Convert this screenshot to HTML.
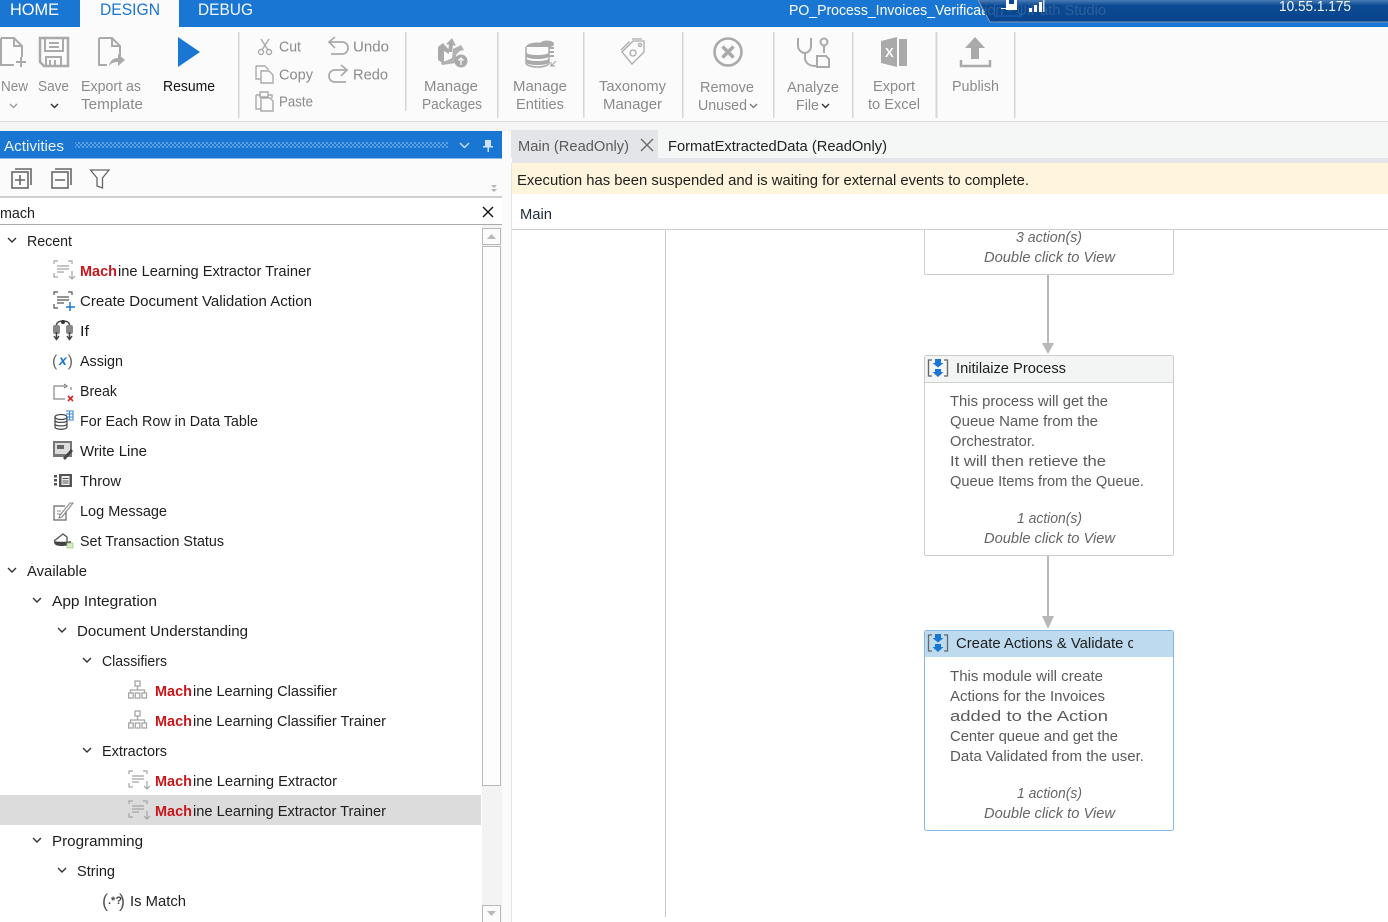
<!DOCTYPE html>
<html><head><meta charset="utf-8"><title>Studio</title>
<style>
html,body{margin:0;padding:0;background:#fff;width:1388px;height:922px;overflow:hidden}
svg{display:block}
text{font-family:"Liberation Sans",sans-serif;font-size:14.5px;fill:#1e1e1e}
.r text,.r{fill:#8b8b8b}
.b{font-weight:bold;fill:#c8171a}
.c{fill:#5a5a5a}
.i{font-style:italic;fill:#666}
.ic{fill:none;stroke:#aaa;stroke-width:2}
.sm{fill:none;stroke:#999;stroke-width:1.2}
.ch{fill:none;stroke:#333;stroke-width:1.4}
</style></head><body>
<svg xmlns="http://www.w3.org/2000/svg" width="1388" height="922" viewBox="0 0 1388 922">
<defs>
<pattern id="dots" width="4" height="4" patternUnits="userSpaceOnUse"><rect width="4" height="4" fill="#1976d2"/><rect width="2" height="2" fill="#5c9fe0"/><rect x="2" y="2" width="2" height="2" fill="#5c9fe0"/></pattern>
<linearGradient id="band" x1="0" y1="0" x2="0" y2="1"><stop offset="0" stop-color="#4a7cb5"/><stop offset=".25" stop-color="#0b4a92"/><stop offset="1" stop-color="#09448d"/></linearGradient>
<g id="ext" class="sm" fill="none"><path d="M1 5V2H5M15 2H19V5M1 14V18H5M4 7H16M4 10H16M4 13H11M19 12V20M16 17L19 20L22 17" stroke="#a5a5a5"/></g>
<g id="cls" fill="none" stroke="#a5a5a5" stroke-width="1.300"><rect x="7" y="1" width="5" height="5"/><path d="M9.500 6V10M2.500 13V10H16.500V13"/><rect x="0.700" y="13" width="4.500" height="5"/><rect x="7.300" y="13" width="4.500" height="5"/><rect x="14" y="13" width="4.500" height="5"/></g>
<g id="seq"><path d="M4 1H0.500V17H4M16 1H19.500V17H16" fill="none" stroke="#666" stroke-width="1.300"/><path d="M7 0H13V4H15.500L10 8.500L4.500 4H7Z" fill="#1976d2"/><path d="M7 10H13V13H15.500L10 18L4.500 13H7Z" fill="#1976d2"/></g>
</defs>

<!-- base -->
<rect width="1388" height="922" fill="#fff"/>
<!-- title bar -->
<rect width="1388" height="27" fill="#1976d2"/>
<rect x="80" width="99" height="27" fill="#fbfbfb"/>
<text x="10" y="15" style="font-size:16.500px;fill:#fff" textLength="49" lengthAdjust="spacingAndGlyphs">HOME</text>
<text x="100" y="15" style="font-size:16.500px;fill:#1976d2" textLength="60" lengthAdjust="spacingAndGlyphs">DESIGN</text>
<text x="198" y="15" style="font-size:16.500px;fill:#f2f7fd" textLength="55" lengthAdjust="spacingAndGlyphs">DEBUG</text>
<text x="789" y="15" style="font-size:14.500px;fill:#fff" textLength="196" lengthAdjust="spacingAndGlyphs">PO_Process_Invoices_Verificat</text>
<path d="M978 0H1388V22H990Z" fill="url(#band)"/>
<path d="M978 0L990 22H1388" fill="none" stroke="#7d97b8" stroke-width="1"/>
<text x="984" y="15" style="font-size:14.500px;fill:#2e5f9c" textLength="122" lengthAdjust="spacingAndGlyphs">ion - UiPath Studio</text>
<rect x="994.500" y="4" width="27" height="12" fill="none" stroke="#1c64b4"/>
<path d="M1006 0H1017V10H1006Z" fill="#fff"/><rect x="1009" y="0" width="5" height="4" fill="#0b4a92"/><rect x="1001" y="8" width="6" height="1" fill="#fff"/>
<path d="M1029 8h3v4h-3zM1034 5h3v7h-3zM1039 2h3v10h-3z" fill="#fff"/>
<rect x="1043" y="0" width="1.500" height="12" fill="#cfd8e6"/>
<text x="1279" y="11" style="font-size:14.500px;fill:#f2f5fa" textLength="72" lengthAdjust="spacingAndGlyphs">10.55.1.175</text>

<!-- ribbon -->
<rect y="27" width="1388" height="94" fill="#fbfbfb"/>
<rect y="121" width="1388" height="1" fill="#dcdcdc"/>
<rect y="122" width="1388" height="9" fill="#f5f5f5"/>
<g fill="#d6d6d6">
<rect x="238" y="32" width="1.500" height="86"/><rect x="405" y="32" width="1.500" height="79"/><rect x="497" y="32" width="1.500" height="86"/><rect x="583" y="32" width="1.500" height="86"/><rect x="682" y="32" width="1.500" height="86"/><rect x="773" y="32" width="1.500" height="86"/><rect x="852" y="32" width="1.500" height="86"/><rect x="935.500" y="32" width="2" height="86"/><rect x="1014" y="32" width="1.500" height="86"/>
</g>

<!-- ribbon icons -->
<path class="ic" d="M1 38H14L22 46V57M14 38V46H22M1 38V65H14"/>
<path d="M20 58h2v4h4v2h-4v4h-2v-4h-4v-2h4z" fill="#aaa" transform="translate(0,-1)"/>
<path class="ic" d="M40 38H68V66H44L40 62Z" style="stroke-width:2.500"/>
<path class="ic" d="M45 38V51H63V38M49 43H59M49 47H59M46 66V57H61V66M50 60V66H55V60"/>
<path class="ic" d="M99 38H112L120 46V56M112 38V46H120M99 38V65H107"/>
<path d="M109 66C110 60 114 58 118 58V54L125 60L118 66V62C114 62 111 63 109 66Z" fill="#aaa"/>
<path d="M178 37L200 52L178 67Z" fill="#1976d2"/>

<g fill="none" stroke="#aaa" stroke-width="1.400">
<path d="M261 39L268 50M269 39L262 50"/><circle cx="261" cy="52" r="2.500"/><circle cx="269" cy="52" r="2.500"/>
<path d="M256 66H265L268 69V70M256 66V79H261M261 71H269L273 75V83H261Z"/>
<path d="M256 95H261M268 95H272V98M256 95V109H261M260 92H268V97H260ZM261 98H270L273 101V111H261Z"/>
<path d="M329 42H342C350 42 350 54 342 54H331" stroke-width="1.700"/><path d="M335 37L329 42L335 48" stroke-width="1.700"/>
<path d="M347 70H335C327 70 327 82 335 82H346" stroke-width="1.700"/><path d="M341 65L347 70L341 76" stroke-width="1.700"/>
</g>

<!-- packages -->
<g fill="#aaa">
<path d="M451 38L456 45H453V52H449V45H446Z" transform="rotate(8 451 45)"/>
<path d="M438 47L443 43L449 50V54L444 51V64L438 60Z"/>
<path d="M453 49L461 45L464 50L460 51L456 55V63L442 65L441 63L452 58Z" opacity=".9"/>
<circle cx="461" cy="61" r="6.500"/>
</g>
<path d="M461 65V58M458.500 60.500L461 58L463.500 60.500" stroke="#fbfbfb" stroke-width="1.300" fill="none"/>

<!-- entities -->
<g>
<ellipse cx="547" cy="44" rx="7" ry="3.500" fill="#aaa"/>
<path d="M545 48H554M548 52H554M548 56H554" stroke="#aaa" stroke-width="2"/>
<ellipse cx="537.500" cy="47" rx="11.500" ry="4.500" fill="#aaa"/>
<path d="M526 47V63C526 65 531 67 537.500 67S549 65 549 63V47" fill="#fbfbfb" stroke="#aaa" stroke-width="1.500"/>
<path d="M526 52C526 56 549 56 549 52V56C549 60 526 60 526 56ZM526 58C526 62 549 62 549 58V62C549 66 526 66 526 62Z" fill="#aaa"/>
<path d="M556 61L551 66M551 62V66H555" stroke="#aaa" fill="none" stroke-width="1.200"/>
</g>
<!-- taxonomy -->
<g fill="none" stroke="#aaa" stroke-width="1.300">
<path d="M622 52L633 41H644V52L632 64Z"/>
<path d="M632 39H642M629.500 41.500L621 50"/>
<circle cx="640" cy="45" r="1.500"/>
<circle cx="633" cy="53" r="3"/>
</g>
<!-- remove -->
<circle cx="728" cy="52" r="13.500" fill="none" stroke="#aaa" stroke-width="2.600"/>
<path d="M722.500 46.500L733.500 57.500M733.500 46.500L722.500 57.500" stroke="#aaa" stroke-width="3.600"/>
<!-- analyze -->
<g fill="none" stroke="#aaa" stroke-width="2">
<path d="M798 38V46C798 50 802 53 805 53C808 53 811 50 811 46V38"/>
<path d="M805 53V58C805 63 810 66 815 66H817"/>
<circle cx="824" cy="42" r="3.500"/><path d="M824 46V53"/>
<path d="M817 56H826L829 59V67H817Z"/>
</g>
<!-- excel -->
<path d="M881 41L897 37V67L881 63Z" fill="#aaa"/>
<rect x="899" y="39" width="8" height="27" fill="#aaa"/>
<text x="885" y="57" style="font-size:13px;font-weight:bold;fill:#fbfbfb">X</text>
<!-- publish -->
<path d="M975 37L985 48H979V59H971V48H965Z" fill="#aaa"/>
<path d="M961 60V66H990V60" fill="none" stroke="#aaa" stroke-width="2.500"/>

<!-- ribbon text -->
<g class="r">
<text class="r" x="1" y="91" textLength="27" lengthAdjust="spacingAndGlyphs">New</text>
<text class="r" x="38" y="91" textLength="31" lengthAdjust="spacingAndGlyphs">Save</text>
<text class="r" x="81" y="91" textLength="60" lengthAdjust="spacingAndGlyphs">Export as</text>
<text class="r" x="81" y="109" textLength="62" lengthAdjust="spacingAndGlyphs">Template</text>
<text class="r" x="279" y="51.500" textLength="22" lengthAdjust="spacingAndGlyphs">Cut</text>
<text class="r" x="353" y="51.500" textLength="36" lengthAdjust="spacingAndGlyphs">Undo</text>
<text class="r" x="279" y="79.500" textLength="34" lengthAdjust="spacingAndGlyphs">Copy</text>
<text class="r" x="353" y="79.500" textLength="35" lengthAdjust="spacingAndGlyphs">Redo</text>
<text class="r" x="279" y="106.500" textLength="34" lengthAdjust="spacingAndGlyphs">Paste</text>
<text class="r" x="424" y="91" textLength="54" lengthAdjust="spacingAndGlyphs">Manage</text>
<text class="r" x="422" y="109" textLength="60" lengthAdjust="spacingAndGlyphs">Packages</text>
<text class="r" x="513" y="91" textLength="54" lengthAdjust="spacingAndGlyphs">Manage</text>
<text class="r" x="516" y="109" textLength="48" lengthAdjust="spacingAndGlyphs">Entities</text>
<text class="r" x="599" y="91" textLength="67" lengthAdjust="spacingAndGlyphs">Taxonomy</text>
<text class="r" x="603" y="109" textLength="59" lengthAdjust="spacingAndGlyphs">Manager</text>
<text class="r" x="700" y="92" textLength="54" lengthAdjust="spacingAndGlyphs">Remove</text>
<text class="r" x="698" y="110" textLength="49" lengthAdjust="spacingAndGlyphs">Unused</text>
<text class="r" x="787" y="92" textLength="52" lengthAdjust="spacingAndGlyphs">Analyze</text>
<text class="r" x="796" y="110" textLength="23" lengthAdjust="spacingAndGlyphs">File</text>
<text class="r" x="873" y="91" textLength="42" lengthAdjust="spacingAndGlyphs">Export</text>
<text class="r" x="868" y="109" textLength="52" lengthAdjust="spacingAndGlyphs">to Excel</text>
<text class="r" x="952" y="91" textLength="47" lengthAdjust="spacingAndGlyphs">Publish</text>
</g>
<text x="163" y="91" style="fill:#111" textLength="52" lengthAdjust="spacingAndGlyphs">Resume</text>
<path d="M10 104L13.500 107.500L17 104" fill="none" stroke="#999" stroke-width="1.300"/>
<path d="M51 104L54.500 107.500L58 104" class="ch"/>
<path d="M750 104L753.500 107.500L757 104" fill="none" stroke="#777" stroke-width="1.300"/>
<path d="M822 104L825.500 107.500L829 104" class="ch"/>

<!-- left panel -->
<rect x="502" y="131" width="10" height="791" fill="#fbfbfb"/>
<rect x="0" y="131" width="502" height="28" fill="#1976d2"/>
<rect x="0" y="158" width="502" height="1" fill="#8fbbe6"/>
<text x="4" y="151" style="fill:#eaf3fc" textLength="60" lengthAdjust="spacingAndGlyphs">Activities</text>
<rect x="75" y="142" width="373" height="6" fill="url(#dots)"/>
<path d="M460 143L464.500 147.500L469 143" fill="none" stroke="#cfe2f6" stroke-width="1.400"/>
<path d="M485 140H491V146H493V147.500H489V152H487.500V147.500H483V146H485Z" fill="#cfe2f6"/>
<rect x="0" y="159" width="502" height="38" fill="#fbfbfb"/>
<rect x="0" y="196" width="502" height="2" fill="#cfcfcf"/>
<g fill="none" stroke="#666" stroke-width="1.600">
<rect x="12" y="172" width="16" height="16"/><path d="M15 169H31V185M20 175V185M15 180H25"/>
<rect x="52" y="172" width="16" height="16"/><path d="M55 169H71V185M55 180H65"/>
<path d="M90.500 170H109L102.500 178V188L97 186V178Z" stroke-width="1.300"/>
</g>
<path d="M491 185H497L494 188ZM491 189H497L494 192Z" fill="#b5b5b5"/>
<rect x="0" y="198" width="502" height="26" fill="#fff"/>
<rect x="0" y="224" width="502" height="1" fill="#aaa"/>
<text x="0" y="218" textLength="35" lengthAdjust="spacingAndGlyphs">mach</text>
<path d="M483 207L493 217M493 207L483 217" stroke="#111" stroke-width="1.400"/>

<!-- scrollbar -->
<rect x="482" y="225" width="20" height="697" fill="#f3f3f3"/>
<rect x="482.500" y="228.500" width="18" height="16" fill="#fbfbfb" stroke="#b9b9b9"/>
<path d="M487 239L491.500 234L496 239Z" fill="#b9b9b9"/>
<rect x="482.500" y="246.500" width="18" height="539" fill="#fdfdfd" stroke="#b9b9b9"/>
<rect x="482.500" y="905.500" width="18" height="17" fill="#fbfbfb" stroke="#b9b9b9"/>
<path d="M487 911L491.500 916L496 911Z" fill="#b9b9b9"/>

<!-- tree selected -->
<rect x="0" y="795" width="481" height="30" fill="#dcdcdc"/>

<!-- tree chevrons -->
<g class="ch">
<path d="M8 238L12 242L16 238"/>
<path d="M8 568L12 572L16 568"/>
<path d="M33 598L37 602L41 598"/>
<path d="M58 628L62 632L66 628"/>
<path d="M83 658L87 662L91 658"/>
<path d="M83 748L87 752L91 748"/>
<path d="M33 838L37 842L41 838"/>
<path d="M58 868L62 872L66 868"/>
</g>

<!-- tree text -->
<text x="27" y="246" textLength="45" lengthAdjust="spacingAndGlyphs">Recent</text>
<text class="b" x="80" y="276" textLength="37" lengthAdjust="spacingAndGlyphs">Mach</text>
<text x="118" y="276" textLength="193" lengthAdjust="spacingAndGlyphs">ine Learning Extractor Trainer</text>
<text x="80" y="306" textLength="232" lengthAdjust="spacingAndGlyphs">Create Document Validation Action</text>
<text x="80" y="336" textLength="9" lengthAdjust="spacingAndGlyphs">If</text>
<text x="80" y="366" textLength="43" lengthAdjust="spacingAndGlyphs">Assign</text>
<text x="80" y="396" textLength="37" lengthAdjust="spacingAndGlyphs">Break</text>
<text x="80" y="426" textLength="178" lengthAdjust="spacingAndGlyphs">For Each Row in Data Table</text>
<text x="80" y="456" textLength="67" lengthAdjust="spacingAndGlyphs">Write Line</text>
<text x="80" y="486" textLength="41" lengthAdjust="spacingAndGlyphs">Throw</text>
<text x="80" y="516" textLength="87" lengthAdjust="spacingAndGlyphs">Log Message</text>
<text x="80" y="546" textLength="144" lengthAdjust="spacingAndGlyphs">Set Transaction Status</text>
<text x="27" y="576" textLength="60" lengthAdjust="spacingAndGlyphs">Available</text>
<text x="52" y="606" textLength="105" lengthAdjust="spacingAndGlyphs">App Integration</text>
<text x="77" y="636" textLength="171" lengthAdjust="spacingAndGlyphs">Document Understanding</text>
<text x="102" y="666" textLength="65" lengthAdjust="spacingAndGlyphs">Classifiers</text>
<text class="b" x="155" y="696" textLength="37" lengthAdjust="spacingAndGlyphs">Mach</text>
<text x="193" y="696" textLength="144" lengthAdjust="spacingAndGlyphs">ine Learning Classifier</text>
<text class="b" x="155" y="726" textLength="37" lengthAdjust="spacingAndGlyphs">Mach</text>
<text x="193" y="726" textLength="193" lengthAdjust="spacingAndGlyphs">ine Learning Classifier Trainer</text>
<text x="102" y="756" textLength="65" lengthAdjust="spacingAndGlyphs">Extractors</text>
<text class="b" x="155" y="786" textLength="37" lengthAdjust="spacingAndGlyphs">Mach</text>
<text x="193" y="786" textLength="144" lengthAdjust="spacingAndGlyphs">ine Learning Extractor</text>
<text class="b" x="155" y="816" textLength="37" lengthAdjust="spacingAndGlyphs">Mach</text>
<text x="193" y="816" textLength="193" lengthAdjust="spacingAndGlyphs">ine Learning Extractor Trainer</text>
<text x="52" y="846" textLength="91" lengthAdjust="spacingAndGlyphs">Programming</text>
<text x="77" y="876" textLength="38" lengthAdjust="spacingAndGlyphs">String</text>
<text x="130" y="906" textLength="56" lengthAdjust="spacingAndGlyphs">Is Match</text>

<!-- tree icons -->
<use href="#ext" x="53" y="259"/>
<g transform="translate(53,290)"><path d="M1 5V2H5M15 2H19V5M1 14V18H5M4 7H16M4 10H16M4 13H11" fill="none" stroke="#555" stroke-width="1.200"/><path d="M17 12V21M13 17H22" stroke="#1976d2" stroke-width="1.500"/></g>
<g transform="translate(53,320)">
<rect x="0" y="5" width="7" height="9" rx="2" fill="#888"/><rect x="13" y="5" width="7" height="9" rx="2" fill="#888"/>
<path d="M3.500 5C3.500 2 7 1 10 1S16.500 2 16.500 5M3.500 12V19M16.500 12V19M1 16L3.500 19.500L6 16M14 16L16.500 19.500L19 16" fill="none" stroke="#444" stroke-width="1.500"/><circle cx="10" cy="2" r="2" fill="#333"/></g>
<text x="52" y="366" style="font-size:16px;fill:#666">(</text>
<text x="73" y="366" style="font-size:16px;fill:#666" text-anchor="end">)</text>
<text x="59" y="365" style="font-size:14px;font-weight:bold;font-style:italic;fill:#1976d2">x</text>
<g transform="translate(53,383)"><path d="M12 3H1V16H12M18 7V4M18 14V16H16" fill="none" stroke="#888" stroke-width="1.200"/><path d="M11 1L14 3L11 5" fill="none" stroke="#666"/><path d="M15 13L20 18M20 13L15 18" stroke="#d9262c" stroke-width="1.600"/></g>
<g transform="translate(54,411)"><g fill="none" stroke="#444" stroke-width="1.200"><ellipse cx="7" cy="6" rx="6" ry="2.500"/><path d="M1 6V16C1 19 13 19 13 16V6M1 9.500C1 12 13 12 13 9.500M1 13C1 15.500 13 15.500 13 13"/></g><path d="M12 0H19V9H13M12 3H19M12 6H19M15.500 0V9" fill="none" stroke="#3d86d3" stroke-width="1.100"/></g>
<g transform="translate(53,441)"><rect x="0" y="0" width="19" height="16" fill="#777"/><rect x="2" y="2" width="15" height="11" fill="#ddd"/><rect x="4" y="4" width="7" height="4" fill="#666"/><path d="M10 17L18 8L20 10L12 19Z" fill="#444"/></g>
<g transform="translate(53,472)"><rect x="1" y="3" width="3" height="2.500" fill="#555"/><rect x="1" y="7" width="3" height="2.500" fill="#555"/><rect x="1" y="11" width="3" height="2.500" fill="#555"/><rect x="6" y="2" width="13" height="13" fill="#555"/><rect x="8.500" y="4" width="8" height="9" fill="#eee"/><path d="M9.500 6.500H15.500M9.500 9H15.500M9.500 11H15.500" stroke="#555"/></g>
<g transform="translate(53,501)"><path d="M12 5H1V19H13V10" fill="none" stroke="#666" stroke-width="1.200"/><path d="M4 10H8M4 13H8" stroke="#888"/><path d="M7 14L17 2L20 2L9 16L6 17Z" fill="none" stroke="#888" stroke-width="1.100"/></g>
<g transform="translate(53,531)"><path d="M1 10L10 3L14 6V12" fill="#fff" stroke="#555" stroke-width="1.300"/><path d="M1 10C4 11 16 11 18 10C18 13 16 15 9 15S1 13 1 10Z" fill="#444"/><rect x="14" y="12" width="6" height="5" fill="#d7ecc6" stroke="#9ac27a" stroke-width=".7"/></g>

<use href="#cls" x="128" y="680"/>
<use href="#cls" x="128" y="710"/>
<use href="#ext" x="128" y="769"/>
<use href="#ext" x="128" y="799"/>
<text x="102" y="907" style="font-size:18px;fill:#555">(</text>
<text x="108" y="904" style="font-size:11px;font-weight:bold;fill:#444">.*?</text>
<text x="125" y="907" style="font-size:18px;fill:#555" text-anchor="end">)</text>

<!-- main tabs -->
<rect x="512" y="130" width="876" height="28" fill="#f5f6f6"/>
<rect x="511" y="130" width="147" height="28" fill="#e4e5e8"/>
<rect x="512" y="158" width="876" height="5" fill="#e4e5e8"/>
<text x="518" y="151" style="fill:#5a5a5a" textLength="111" lengthAdjust="spacingAndGlyphs">Main (ReadOnly)</text>
<path d="M641 139L653 151M653 139L641 151" stroke="#6b6b6b" stroke-width="1.400"/>
<text x="668" y="151" style="fill:#222" textLength="219" lengthAdjust="spacingAndGlyphs">FormatExtractedData (ReadOnly)</text>
<rect x="512" y="163" width="876" height="31" fill="#fff5dd"/>
<text x="517" y="185" style="fill:#1e1e1e" textLength="512" lengthAdjust="spacingAndGlyphs">Execution has been suspended and is waiting for external events to complete.</text>
<rect x="512" y="194" width="876" height="35" fill="#fff"/>
<text x="520" y="219" style="fill:#1e2a3a" textLength="32" lengthAdjust="spacingAndGlyphs">Main</text>
<rect x="512" y="229" width="876" height="1" fill="#cfcfcf"/>
<rect x="511" y="163" width="1" height="759" fill="#e6e6e6"/>
<rect x="665" y="230" width="1" height="687" fill="#c8c8c8"/>

<!-- connectors -->
<g fill="#b8b8b8">
<rect x="1047" y="275" width="2" height="69"/><path d="M1042 343H1054L1048 354Z"/>
<rect x="1047" y="556" width="2" height="61"/><path d="M1042 616H1054L1048 629Z"/>
</g>

<!-- card 1 -->
<path d="M924.500 230V272.500Q924.500 274.500 926.500 274.500H1171.500Q1173.500 274.500 1173.500 272.500V230" fill="#fff" stroke="#cccccc"/>
<text class="i" x="1016" y="242" textLength="66" lengthAdjust="spacingAndGlyphs">3 action(s)</text>
<text class="i" x="984" y="262" textLength="131" lengthAdjust="spacingAndGlyphs">Double click to View</text>

<!-- card 2 -->
<rect x="924.500" y="355.500" width="249" height="200" rx="2" fill="#fff" stroke="#cccccc"/>
<path d="M925 382V358Q925 356 927 356H1171Q1173 356 1173 358V382Z" fill="#f3f4f4"/>
<rect x="925" y="382" width="248" height="1" fill="#d2d2d2"/>
<use href="#seq" x="928" y="359"/>
<text x="956" y="373" textLength="110" lengthAdjust="spacingAndGlyphs">Initilaize Process</text>
<text class="c" x="950" y="406" textLength="158" lengthAdjust="spacingAndGlyphs">This process will get the</text>
<text class="c" x="950" y="426" textLength="148" lengthAdjust="spacingAndGlyphs">Queue Name from the</text>
<text class="c" x="950" y="446" textLength="85" lengthAdjust="spacingAndGlyphs">Orchestrator.</text>
<text class="c" x="950" y="466" textLength="156" lengthAdjust="spacingAndGlyphs">It will then retieve the</text>
<text class="c" x="950" y="486" textLength="194" lengthAdjust="spacingAndGlyphs">Queue Items from the Queue.</text>
<text class="i" x="1017" y="523" textLength="65" lengthAdjust="spacingAndGlyphs">1 action(s)</text>
<text class="i" x="984" y="543" textLength="131" lengthAdjust="spacingAndGlyphs">Double click to View</text>

<!-- card 3 -->
<rect x="924.500" y="630.500" width="249" height="200" rx="2" fill="#fff" stroke="#86b9e0"/>
<path d="M925 657V633Q925 631 927 631H1171Q1173 631 1173 633V657Z" fill="#bedaee"/>
<use href="#seq" x="928" y="634"/>
<text x="956" y="648" textLength="179" lengthAdjust="spacingAndGlyphs">Create Actions &amp; Validate c</text>
<rect x="1133" y="634" width="30" height="20" fill="#bedaee"/>
<text class="c" x="950" y="681" textLength="153" lengthAdjust="spacingAndGlyphs">This module will create</text>
<text class="c" x="950" y="701" textLength="155" lengthAdjust="spacingAndGlyphs">Actions for the Invoices</text>
<text class="c" x="950" y="721" textLength="158" lengthAdjust="spacingAndGlyphs">added to the Action</text>
<text class="c" x="950" y="741" textLength="168" lengthAdjust="spacingAndGlyphs">Center queue and get the</text>
<text class="c" x="950" y="761" textLength="194" lengthAdjust="spacingAndGlyphs">Data Validated from the user.</text>
<text class="i" x="1017" y="798" textLength="65" lengthAdjust="spacingAndGlyphs">1 action(s)</text>
<text class="i" x="984" y="818" textLength="131" lengthAdjust="spacingAndGlyphs">Double click to View</text>
</svg>
</body></html>
